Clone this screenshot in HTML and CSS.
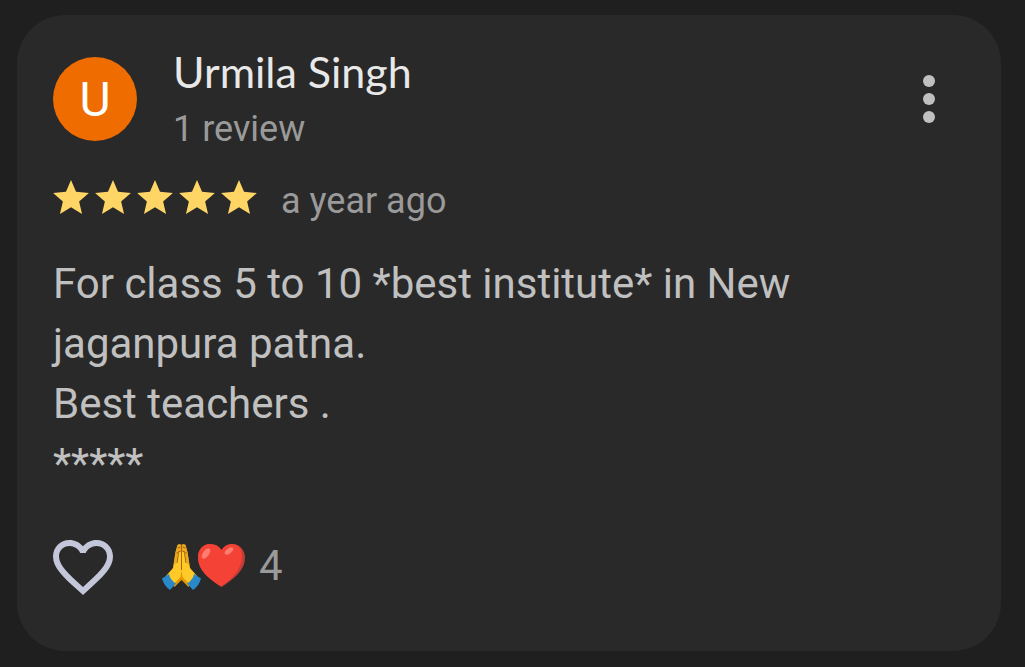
FILE: index.html
```html
<!DOCTYPE html>
<html lang="en">
<head>
  <meta charset="UTF-8" />
  <meta name="viewport" content="width=device-width, initial-scale=1.0"/>
  <title>Review by Urmila Singh</title>
  <link rel="stylesheet" href="styles.css">
</head>
<body>
  <article class="review-card">
    <!-- Reviewer -->
    <header class="review-header">
      <div class="avatar">U</div>
      <div class="reviewer">
        <h1>Urmila Singh</h1>
        <p>1 review</p>
      </div>
      <button class="icon-button" type="button" aria-label="More options">
        <svg viewBox="0 0 24 24"><circle cx="12" cy="6" r="2"/><circle cx="12" cy="12" r="2"/><circle cx="12" cy="18" r="2"/></svg>
      </button>
    </header>

    <!-- Rating -->
    <div class="rating">
      <div class="stars" role="img" aria-label="5 stars">
        <svg viewBox="2 2 20 19"><path d="M12 17.27L18.18 21l-1.64-7.03L22 9.24l-7.19-.61L12 2 9.19 8.63 2 9.24l5.46 4.73L5.82 21z"/></svg>
        <svg viewBox="2 2 20 19"><path d="M12 17.27L18.18 21l-1.64-7.03L22 9.24l-7.19-.61L12 2 9.19 8.63 2 9.24l5.46 4.73L5.82 21z"/></svg>
        <svg viewBox="2 2 20 19"><path d="M12 17.27L18.18 21l-1.64-7.03L22 9.24l-7.19-.61L12 2 9.19 8.63 2 9.24l5.46 4.73L5.82 21z"/></svg>
        <svg viewBox="2 2 20 19"><path d="M12 17.27L18.18 21l-1.64-7.03L22 9.24l-7.19-.61L12 2 9.19 8.63 2 9.24l5.46 4.73L5.82 21z"/></svg>
        <svg viewBox="2 2 20 19"><path d="M12 17.27L18.18 21l-1.64-7.03L22 9.24l-7.19-.61L12 2 9.19 8.63 2 9.24l5.46 4.73L5.82 21z"/></svg>
      </div>
      <span class="date">a year ago</span>
    </div>

    <p class="review-text">For class 5 to 10 *best institute* in New jaganpura patna.<br>Best teachers .<br>*****</p>

    <!-- Reactions -->
    <footer class="actions">
      <button class="icon-button like-button" type="button" aria-label="Like">
        <svg viewBox="0 0 24 24"><path d="M16.5 3c-1.74 0-3.41.81-4.5 2.09C10.91 3.81 9.24 3 7.5 3 4.42 3 2 5.42 2 8.5c0 3.78 3.4 6.86 8.55 11.54L12 21.35l1.45-1.32C18.6 15.36 22 12.28 22 8.5 22 5.42 19.58 3 16.5 3zm-4.4 15.55l-.1.1-.1-.1C7.14 14.24 4 11.39 4 8.5 4 6.5 5.5 5 7.5 5c1.54 0 3.04.99 3.57 2.36h1.87C13.46 5.99 14.96 5 16.5 5c2 0 3.5 1.5 3.5 3.5 0 2.89-3.14 5.74-7.9 10.05z"/></svg>
      </button>
      <div class="reactions">
        <svg class="hands" viewBox="0 0 40 46" aria-hidden="true">
          <path fill="#ffca28" d="M15.500 1Q17.500-.5 19.500 1Q21.500-.5 23.500 1L25.500 8L28 24L35 32L27 42L19.500 34L12 42L4 32L11 24L13.500 8Z"/>
          <path fill="#e39a1c" d="M15.500 1Q17.500-.5 19.500 1Q21.500-.5 23.500 1L25.500 8L27.500 22L24.500 18L23 9L20 8H19L16 9L14.500 18L11.500 22L13.500 8Z" opacity=".7"/>
          <path fill="none" stroke="#a8650f" stroke-width="1" d="M19.500 1V26M15.500 4L18.500 3M20.500 3L23.500 4M14.500 9L18.500 7M20.500 7L24.500 9M16.500 9L15 19M22.500 9L24 19"/>
          <path fill="#e59600" d="M19.500 26L20.500 33L28 41L26.500 43L19.500 36L12.500 43L11 41L18.500 33Z"/>
          <path fill="#2888c8" d="M7 30Q8 36 14 39.500L8 46Q2 42 0 34.500ZM32 30Q31 36 25 39.500L31 46Q37 42 39 34.500Z"/>
        </svg>
        <svg class="heart" viewBox="0 0 47 43" aria-hidden="true">
          <path fill="#c33c36" d="M23.500 6C26 2 30 0 34.500 0C41.500 0 47 6 47 14C47 26 36 35 23.500 43C11 35 0 26 0 13.500C0 5.500 5 0 12 0C17 0 21 2 23.500 6Z"/>
          <path fill="#f44336" d="M23.500 6C26 2 29.500 0 33.500 0C40 0 44 5 44 12.500C44 25 34 35 23 42.500C11 35 0 26 0 13.500C0 5.500 5 0 12 0C17 0 21 2 23.500 6Z"/>
          <ellipse fill="#ff7d70" cx="8" cy="9.500" rx="3" ry="6" transform="rotate(36 8 9.500)"/>
          <ellipse fill="#ff7d70" cx="31" cy="7" rx="2.500" ry="5" transform="rotate(52 31 7)"/>
        </svg>
        <span class="count">4</span>
      </div>
    </footer>
  </article>
</body>
</html>
```

FILE: styles.css
```css
:root {
  --bg-color: #1f1f1f;
  --card-color: #292929;
  --name-color: #e8e8e8;
  --text-color: #c0c0c0;
  --muted-color: #9a9a9a;
  --avatar-color: #ef6c00;
  --star-color: #ffd666;
  --like-color: #c4c6d9;
}

* {
  box-sizing: border-box;
}

body {
  margin: 0;
  padding: 15px 24px 16px 17px;
  font-family: Roboto, sans-serif;
  background-color: var(--bg-color);
  color: var(--text-color);
}

h1, p {
  margin: 0;
}

svg {
  display: block;
}

.review-card {
  padding: 30px 36px 48px;
  border-radius: 48px;
  background-color: var(--card-color);
}

.review-header {
  display: flex;
  align-items: flex-start;
}

.avatar {
  width: 84px;
  height: 84px;
  margin: 12px 36px 0 0;
  border-radius: 50%;
  background-color: var(--avatar-color);
  color: #fff;
  font-size: 48px;
  line-height: 86px;
  text-align: center;
}

.reviewer {
  flex: 1;
}

.reviewer h1 {
  color: var(--name-color);
  font-family: Lato, sans-serif;
  font-size: 43px;
  font-weight: 400;
  line-height: 54px;
}

.reviewer p {
  color: var(--muted-color);
  font-size: 36px;
  line-height: 60px;
}

.icon-button {
  width: 72px;
  height: 72px;
  padding: 0;
  border: none;
  background: none;
  color: var(--text-color);
  cursor: pointer;
}

.icon-button svg {
  width: 72px;
  height: 72px;
  fill: currentColor;
}

.review-header .icon-button {
  margin-top: 18px;
}

.rating {
  display: flex;
  gap: 24px;
  margin-top: 18px;
}

.stars {
  display: flex;
  gap: 6px;
  padding-top: 3px;
}

.stars svg {
  width: 36px;
  height: 34px;
  fill: var(--star-color);
}

.date {
  color: var(--muted-color);
  font-size: 36px;
  line-height: 48px;
}

.review-text {
  margin-top: 29px;
  font-size: 42px;
  line-height: 60px;
}

.actions {
  display: flex;
  align-items: center;
  gap: 43px;
  margin: 37px 0 0 -6px;
}

.like-button {
  color: var(--like-color);
}

.reactions {
  display: flex;
  align-items: flex-start;
}

.hands {
  width: 40px;
  height: 46px;
}

.heart {
  width: 47px;
  height: 43px;
  margin-left: -4px;
}

.count {
  margin-left: 14px;
  color: var(--muted-color);
  font-size: 42px;
  line-height: 44px;
}
```
